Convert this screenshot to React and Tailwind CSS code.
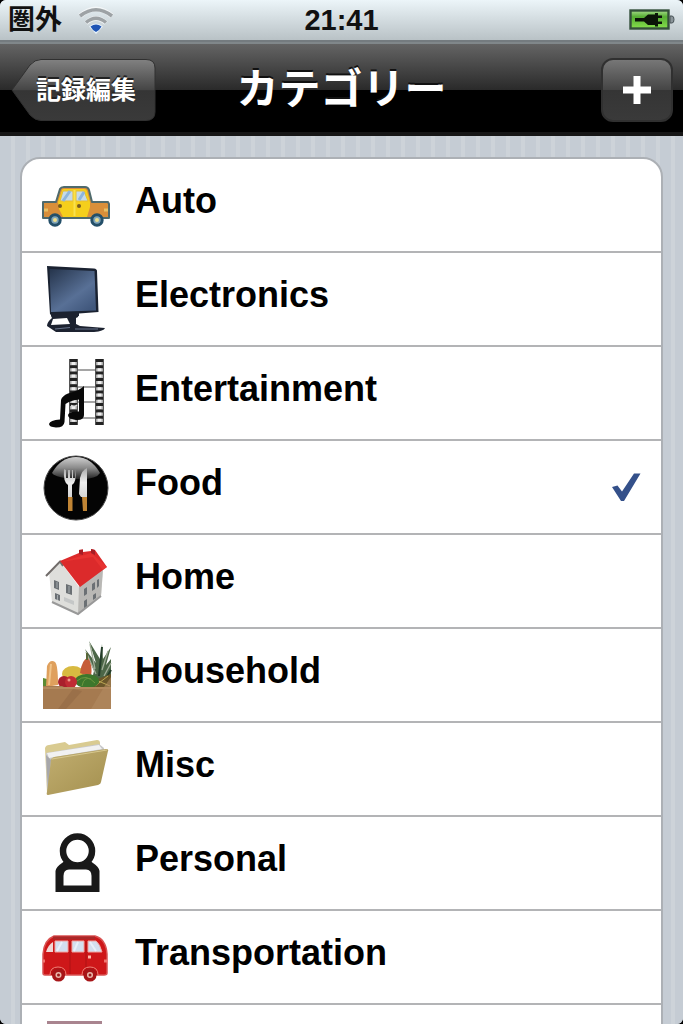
import React from "react";

function Wifi() {
  return (
    <svg viewBox="0 0 36 28" className="h-7 w-9" aria-hidden="true">
      <g fill="none" stroke="#fff" strokeWidth="5" opacity=".6">
        <path d="M2 10Q18-4 34 10" />
        <path d="M8 17Q18 8 28 17" />
      </g>
      <g fill="none" stroke="#9da2a5" strokeWidth="3.600">
        <path d="M2 10Q18-2.500 34 10" />
        <path d="M8 16.500Q18 8 28 16.500" />
      </g>
      <path d="M11 20.500Q18 14.500 25 20.500L18 28Z" fill="#e8f2fa" />
      <path d="M12.500 20.500Q18 16.500 23.500 20.500L21 24L18 26L15 24Z" fill="#1f55b5" />
    </svg>
  );
}

function Battery() {
  return (
    <svg viewBox="0 0 46 22" className="h-5.5 w-11.5" aria-hidden="true">
      <defs>
        <linearGradient id="bat" x2="0" y2="1">
          <stop offset="0" stopColor="#a8dc8c" />
          <stop offset=".35" stopColor="#55ad32" />
          <stop offset="1" stopColor="#86e04c" />
        </linearGradient>
      </defs>
      <rect x="1.500" y="1.500" width="38" height="18" fill="url(#bat)" stroke="#34503a" strokeWidth="2.400" />
      <path d="M41 7H43Q45 7 45 10.500T43 14H41Z" fill="#8a9499" stroke="#4a5459" />
      <path d="M6 9H15L19 5.500H26V4H29V6.500H33V9H29V12.500H33V15H29V17.500H26V16H19L15 12.500H6Z" fill="#0b1408" />
    </svg>
  );
}

function AutoIcon() {
  return (
    <>
      <path d="M1 33H14L18 20Q19 18 22 18H43Q46 18 47 21L50 33H66L67 35V49H1Z" fill="#d98f3a" stroke="#4f6a6c" strokeWidth="2" strokeLinejoin="round" />
      <path d="M16 33L20 21Q20.500 20 22 20H42Q44.500 20 45 22L48 33V38L45 48H21L17 40Z" fill="#f5cf1c" />
      <path d="M21 22H31V32H18ZM34 22H42L46 32H34Z" fill="#c5dae8" stroke="#e5bd32" />
      <path d="M28 22L21 32M42 23L37 31" stroke="#8db5dc" strokeWidth="3" />
      <path d="M32.500 21V47" stroke="#f9e24d" strokeWidth="2" />
      <path d="M2 41H6M62 41H66" stroke="#e9c064" strokeWidth="3" />
      <circle cx="18" cy="37" r="2" fill="#765a20" />
      <circle cx="37" cy="37" r="2" fill="#765a20" />
      <g fill="#7fa4b8" stroke="#244f69" strokeWidth="3">
        <circle cx="13" cy="51" r="5.200" />
        <circle cx="55" cy="51" r="5.200" />
      </g>
      <circle cx="13" cy="51" r="2" fill="#eedf8f" />
      <circle cx="55" cy="51" r="2" fill="#eedf8f" />
    </>
  );
}

function ElectronicsIcon() {
  return (
    <>
      <defs>
        <linearGradient id="scr" x1="0" y1="0" x2=".8" y2="1">
          <stop offset="0" stopColor="#25344b" />
          <stop offset=".65" stopColor="#587096" />
          <stop offset="1" stopColor="#40577c" />
        </linearGradient>
      </defs>
      <path d="M5 3L52 5.500Q55 6 55 8L56.500 49L37 50.500V53L8 51.500Z" fill="#1a2231" />
      <path d="M7.500 6L52.500 8L54 47.500L9 49Z" fill="url(#scr)" />
      <path d="M9 50L37 50L36 54L34 55V61L38 63L63 65Q62 68 52 69L14 69L5 63Q5 59 10 55L9 53Z" fill="#1c2230" />
      <path d="M11 56L25 55L28 61L9 62Z" fill="#fff" />
      <path d="M33 66L56 66M13 66L28 64.500" stroke="#66728a" strokeWidth="1.200" />
    </>
  );
}

function EntertainmentIcon() {
  return (
    <>
      <g stroke="#a5a5a5" strokeWidth="2">
        <path d="M36 13H54M36 30H54M36 45H54M36 61H54" />
      </g>
      <path d="M31.500 2V68M57.500 2V68" stroke="#a9a9a9" strokeWidth="9" />
      <path d="M31.500 2V68M57.500 2V68" stroke="#222" strokeWidth="8" strokeDasharray="3 3.300" />
      <path d="M31.500 5V68M57.500 5V68" stroke="#eee" strokeWidth="4" strokeDasharray="3 3.300" />
      <path d="M27.500 2V68M35.500 2V68M53.500 2V68M61.500 2V68" stroke="#555" />
      <path d="M19 43Q20 39 26 36.500Q37 34 42 29V58Q42 63.500 34 63Q26 62 26 58Q27 54 37 54.500V42.500Q29 43 23.500 47L22.500 65Q22 70.500 14 70.500Q7 70 7 67Q8 63 18 62.500Z" fill="#080808" />
      <path d="M29 48.500Q33 50 35 48" fill="none" stroke="#ddd" strokeWidth="1.500" />
    </>
  );
}

function FoodIcon() {
  return (
    <>
      <defs>
        <linearGradient id="gloss" x2="0" y2="1">
          <stop offset="0" stopColor="#d0d0d0" />
          <stop offset=".5" stopColor="#8a8a8a" />
          <stop offset="1" stopColor="#222" />
        </linearGradient>
        <linearGradient id="steel" x2="0" y2="1">
          <stop offset="0" stopColor="#aaa" />
          <stop offset=".5" stopColor="#eee" />
          <stop offset="1" stopColor="#d5d5d5" />
        </linearGradient>
      </defs>
      <circle cx="34" cy="37" r="32" fill="#040404" stroke="#4b4b4b" />
      <path d="M10 22Q19 6 34 6T58 22Q54 29 34 28T10 22Z" fill="url(#gloss)" />
      <path d="M22 18L24 19V27H26V19H28V27H30V19H31V27H33V18Q35 31 30 34V46H26V34Q21 31 22 18Z" fill="url(#steel)" />
      <path d="M38 27Q40 19 45 17V46H39L37 43Z" fill="url(#steel)" />
      <path d="M26 46H30.500V60H26ZM40 46H45V60H41Z" fill="#c08434" />
    </>
  );
}

function HomeIcon() {
  return (
    <>
      <path d="M7 27L18 16L37 42L61 25L59 51L36 69.500L10 57Z" fill="#dededb" />
      <path d="M37 41L61 24L59 51L36 69.500Z" fill="#b9b8b5" />
      <path d="M10 57L36 69L59 51" fill="none" stroke="#999" strokeWidth="2" />
      <path d="M4 31L18 16.500L21 21" fill="none" stroke="#716c6a" strokeWidth="2" />
      <path d="M18 16L37 8V5L41 4.500V7L49 6V4L53 5L65 22L38 42Z" fill="#dc2a2b" />
      <path d="M19 17L49 8L65 22L61 25L51 12Z" fill="#f03b37" opacity=".55" />
      <path d="M37 5L41 4.500V10L37 9ZM49 4L53 5V10L49 8Z" fill="#a61d24" />
      <g fill="#6b7074">
        <path d="M12 35L17 37V45L12 43ZM24 39L30 41V50L24 48ZM13 48L18 50V56L13 54ZM42 44L45 42V49L42 51ZM50 39L53 37V44L50 46ZM55 35L57 34V41L55 43ZM42 56L45 54V61L42 63ZM51 50L54 48V53L51 55Z" />
      </g>
      <path d="M22 52L32 56V60L22 56Z" fill="#c5c7c7" />
      <path d="M15 37V43M27 41V48M15.500 50V55" stroke="#a4aaad" />
    </>
  );
}

function HouseholdIcon() {
  return (
    <>
      <path d="M52 32L43 10L54 24L47 2L58 20L60 5L61 20L69 8L64 26L69 20V37L60 47L49 44Z" fill="#4c6647" />
      <path d="M53 30L48 5M60 31L66 12M54 35L44 13M62 37L69 24" stroke="#a0ad98" strokeWidth="1.300" />
      <path d="M57 37L60 8M63 41L69 31" stroke="#243d2a" strokeWidth="2" />
      <path d="M50 42L69 35V49H50Z" fill="#6b572a" />
      <path d="M54 41L68 47M53 47L66 37" stroke="#bba653" />
      <ellipse cx="31" cy="35" rx="11" ry="8" fill="#d8ba41" />
      <path d="M38 34Q40 20 46 19Q51 25 49 38Z" fill="#c65d38" />
      <path d="M45 14V21" stroke="#596738" strokeWidth="2" />
      <ellipse cx="45" cy="42" rx="12" ry="7" fill="#3d772c" />
      <path d="M35 42Q44 34 53 44M40 47Q42 37 49 40" fill="none" stroke="#6c963f" />
      <circle cx="22" cy="43" r="6" fill="#a9202c" />
      <circle cx="29" cy="43" r="6" fill="#c12c34" />
      <circle cx="27" cy="41" r="1.500" fill="#ed9b8b" />
      <path d="M1 39L5 40V49H1Z" fill="#5c8b33" />
      <path d="M4 48L5 27Q8 20 13 23Q16 26 16 46Z" fill="#dfa05d" />
      <path d="M7 46L9 25" stroke="#f1c489" strokeWidth="2" />
      <path d="M1 47H20L24 49H69V70H1Z" fill="#a57a50" />
      <path d="M1 48H69V50H1Z" fill="#b58b5f" />
      <path d="M16 70L31 50L40 52L24 70Z" fill="#906641" opacity=".5" />
      <path d="M49 70L62 48L69 38V70Z" fill="#b28a60" opacity=".6" />
    </>
  );
}

function MiscIcon() {
  return (
    <>
      <defs>
        <linearGradient id="fold" x1="0" y1="0" x2="1" y2="1">
          <stop offset="0" stopColor="#c1ae70" />
          <stop offset="1" stopColor="#a4904f" />
        </linearGradient>
      </defs>
      <path d="M3 15Q4 12 7 12L23 9L27 12L55 7Q58 7 58 10V45L5 60Z" fill="#d9cb91" />
      <path d="M4 20L57 11L62 15L61 23L7 58L5 56Z" fill="#c8c8c9" />
      <path d="M5 20L57 12L60 16L7 25Z" fill="#f1f1f1" />
      <path d="M4 22L9 27L6 57Z" fill="#a7a7aa" />
      <path d="M9 27Q9 25 12 24L64 16Q67 16 66 18L59 49Q59 51 56 52L6 62Q4 62 5 59Z" fill="url(#fold)" />
      <path d="M10 26L65 17" stroke="#d7c88f" />
    </>
  );
}

function PersonalIcon() {
  return (
    <>
      <path d="M13.500 65V44Q14 40 20 36L24 33H47L51 36Q57 40 57.500 44V65Z" fill="#191919" />
      <circle cx="35.500" cy="24" r="14.500" fill="#fff" stroke="#191919" strokeWidth="6.500" />
      <path d="M21.500 58.500V49Q21.500 42.500 27 42.500H44Q49.500 42.500 49.500 49V58.500Z" fill="#fff" />
    </>
  );
}

function TransportationIcon() {
  return (
    <>
      <path d="M1 33Q2 19 12 15H53Q64 18 65 33V52Q65 54 62 54H3Q1 54 1 52Z" fill="#ce1719" stroke="#d95353" strokeWidth="1.500" />
      <path d="M11 17H53" stroke="#a92929" strokeWidth="3" />
      <path d="M11 21V31H4Q6 24 11 21Z" fill="#f1d7d5" />
      <path d="M13 20H26V31H13ZM30 20H42V31H30ZM46 20H54Q58 23 60 31H46Z" fill="#d3dfef" stroke="#f1a6a1" />
      <path d="M15 30L20 21M32 30L36 21M48 21L54 30" stroke="#e9f0fa" strokeWidth="2" />
      <path d="M28 20V53M44 20V53" stroke="#ae1214" />
      <path d="M46 36H49" stroke="#ffb7a9" strokeWidth="3" />
      <path d="M1 40H3M62 40H65" stroke="#ef7770" strokeWidth="3" />
      <path d="M8 54Q8 46 16 46T24 54M40 54Q40 46 48 46T56 54" fill="#bc1115" stroke="#ee8177" />
      <g fill="#e9b6aa" stroke="#a71619" strokeWidth="3.500">
        <circle cx="16.500" cy="54" r="4.800" />
        <circle cx="48" cy="54" r="4.800" />
      </g>
      <circle cx="16.500" cy="54" r="1.500" fill="#9a1c1c" />
      <circle cx="48" cy="54" r="1.500" fill="#9a1c1c" />
    </>
  );
}

function CardIcon() {
  return <rect x="5" y="6" width="55" height="60" fill="#a9848f" />;
}

const categories = [
  { name: "Auto", Icon: AutoIcon },
  { name: "Electronics", Icon: ElectronicsIcon },
  { name: "Entertainment", Icon: EntertainmentIcon },
  { name: "Food", Icon: FoodIcon, selected: true },
  { name: "Home", Icon: HomeIcon },
  { name: "Household", Icon: HouseholdIcon },
  { name: "Misc", Icon: MiscIcon },
  { name: "Personal", Icon: PersonalIcon },
  { name: "Transportation", Icon: TransportationIcon },
  { name: "", Icon: CardIcon },
];

function CategoryRow({ name, Icon, selected }) {
  return (
    <li className="border-b-2 border-[#b3b4b6] last:border-b-0">
      <button type="button" aria-pressed={!!selected} className="flex h-23 w-full items-center gap-[21px] px-5 text-left">
        <svg viewBox="0 0 72 72" className="size-18 shrink-0" aria-hidden="true">
          <Icon />
        </svg>
        <span className="flex-1 pb-2 text-[36px] leading-10 font-bold text-black">{name}</span>
        {selected && (
          <svg viewBox="0 0 30 30" className="size-7.5 shrink-0" aria-hidden="true">
            <path d="M1 15L6.500 13.500L11 19.500L23 1.500H29.500L13 29H10Z" fill="#34508a" />
          </svg>
        )}
      </button>
    </li>
  );
}

export default function App() {
  return (
    <div className="h-dvh bg-black font-['Liberation_Sans','Noto_Sans_CJK_JP',sans-serif]">
      <div className="flex h-full flex-col overflow-hidden rounded-md bg-[#c5ccd4]">
        <div className="grid h-10.5 shrink-0 grid-cols-3 items-center border-b-2 border-[#747b7f] bg-linear-to-b from-[#ecf5f9] to-[#b9c2c6] px-2 font-bold text-[#111]">
          <div className="flex items-center gap-4">
            <span className="text-[27px] leading-8">圏外</span>
            <Wifi />
          </div>
          <span className="text-center text-[29px] leading-8">21:41</span>
          <div className="flex justify-end">
            <Battery />
          </div>
        </div>
        <header className="grid h-23.5 shrink-0 grid-cols-[1fr_auto_1fr] items-center border-t-2 border-b-4 border-t-[#80878a] border-b-[#161616] bg-[linear-gradient(#646464,#2a2a2a_52%,#000_52%)] px-2.5 pt-1 text-white">
          <button type="button" className="relative flex h-16 w-36.5 items-center justify-center pl-1.5">
            <svg viewBox="0 0 146 64" className="absolute inset-0 size-full" aria-hidden="true">
              <defs>
                <linearGradient id="back" x2="0" y2="1">
                  <stop offset="0" stopColor="#818181" />
                  <stop offset=".5" stopColor="#454545" />
                  <stop offset=".51" stopColor="#353535" />
                  <stop offset="1" stopColor="#3a3a3a" />
                </linearGradient>
              </defs>
              <path d="M2 32L20 7Q25 1.500 31 1.500H136Q145 1.500 145 10V54Q145 62.500 136 62.500H31Q25 62.500 20 57Z" fill="url(#back)" stroke="#303030" />
            </svg>
            <span className="relative text-[25px] leading-8 font-bold [text-shadow:0_-2px_0_#222]">記録編集</span>
          </button>
          <h1 className="text-[42px] leading-12 font-bold [text-shadow:0_-2px_0_#111]">カテゴリー</h1>
          <button type="button" aria-label="+" className="flex h-16 w-18 items-center justify-center justify-self-end rounded-xl border-2 border-[#303030] bg-[linear-gradient(#777,#454545_50%,#353535_50%,#3a3a3a)]">
            <svg viewBox="0 0 30 30" className="size-7.5" aria-hidden="true">
              <path d="M11.500 1H18.500V11.500H29V18.500H18.500V29H11.500V18.500H1V11.500H11.500Z" fill="#fff" />
            </svg>
          </button>
        </header>
        <main className="min-h-0 flex-1 overflow-y-auto bg-[repeating-linear-gradient(90deg,#c5ccd4_0_11px,#cdd3d9_11px_15px)] px-5 py-[21px] [scrollbar-width:none]">
          <ul className="overflow-hidden rounded-[20px] border-2 border-[#acb0b5] bg-white">
            {categories.map((c) => (
              <CategoryRow key={c.name} {...c} />
            ))}
          </ul>
        </main>
      </div>
    </div>
  );
}
